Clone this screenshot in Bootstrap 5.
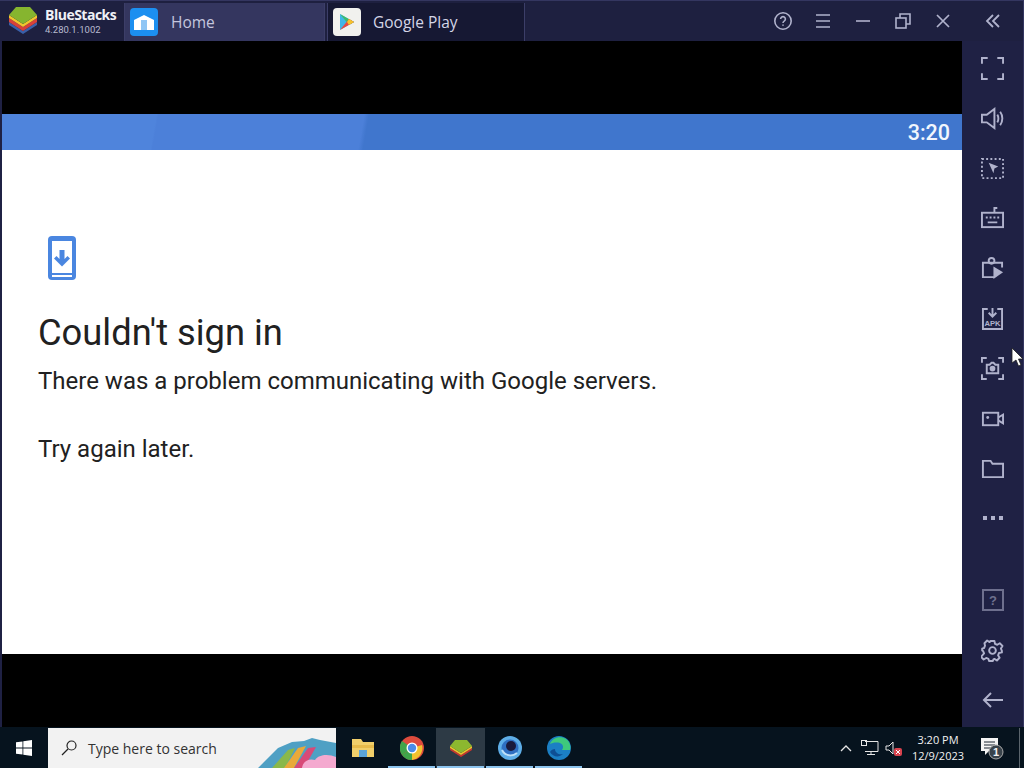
<!DOCTYPE html>
<html lang="en"><head><meta charset="utf-8"><title>BlueStacks</title>
<link href="https://cdn.jsdelivr.net/npm/bootstrap@5.3.0/dist/css/bootstrap.min.css" rel="stylesheet">
<style>
html,body{margin:0;height:768px;overflow:hidden}
body{font-family:"Roboto",sans-serif;background:#06131e}
.bs-window{height:727px;width:1024px;background:#1f2144;border-top:1px solid #343660;border-right:1px solid #343660}
.bs-top{height:40px;background:#1e2040}
.bs-brand{width:124px;flex:none;padding-left:8px;gap:7px}
.bs-name{font:700 14px/14px "Open Sans",sans-serif;color:#f0f0f6;margin-top:7px;letter-spacing:-.5px}
.bs-ver{font:9.500px/12px "Roboto",sans-serif;color:#b9bbd0;margin-top:2px}
.bs-tab{height:38px;margin-top:2px;flex:none;font:15.500px "Open Sans",sans-serif;color:#c4c6de;border-left:1px solid #3c3e68;border-right:1px solid #3c3e68}
.tab-home{width:201px;background:#34365f;padding-left:5px;gap:13px;margin-right:2px}
.tab-play{width:198px;background:#161833;padding-left:5px;gap:12px;color:#d4d5e6}
.tile{width:28px;height:28px;border-radius:4px;flex:none}
.tile-home{background:#1c8ff0}
.tile-play{background:#f1f1ee}
.win-btn{width:40px;height:40px;flex:none}
.win-gap{width:50px;height:40px;margin-left:5px;margin-right:5px;flex:none}
.win-space{flex:1}
.stage{width:960px;margin-left:2px;flex:none}
.side{flex:1}
.bar-black{background:#000}
.bar-a{height:73px}
.bar-b{height:73px}
.status{height:36px;background:linear-gradient(100deg,#4f84dc 0,#4f84dc 16%,#4c80d9 16.200%,#4c80d9 37.500%,#4076cd 38%,#4076cd 100%);color:#f2f6fd;font-weight:500;font-size:21.500px;padding-right:12px;padding-top:2px}
.pane{height:504px;background:#fff;padding:86px 0 0 36px;color:#212121}
.pane h1{font:400 36.300px/40px "Roboto",sans-serif;margin:33px 0 11px;color:#212121}
.pane p{font:400 24px/34px "Roboto",sans-serif;margin:0 0 34px}
.phone{display:block;margin-left:10px}
.side-top{padding-top:2px}
.side-btn{height:50px}
.side-space{height:32px}
.dim{opacity:.55}
.taskbar{height:40px;width:1024px;background:#06131e;margin-top:1px;color:#fff}
.start{width:48px;flex:none}
.search{width:288px;flex:none;background:#f2f2f2;color:#333;font:14px "Segoe UI","Open Sans",sans-serif;padding-left:13px;gap:11px;position:relative;overflow:hidden}
.search-art{position:absolute;right:0;top:0}
.task-first{margin-left:2px}
.task-app{width:49px;height:40px;position:relative;flex:none}
.task-app.on{background:#2d3a45}
.task-app.open::after{content:"";position:absolute;left:1px;right:1px;bottom:0;height:2px;background:#8cc4ee}
.tray-sp{flex:1}
.clock{font:11px/16px "Open Sans",sans-serif;color:#f2f2f2;width:64px;flex:none;text-align:center}
.tray{width:24px;flex:none}
.notif{width:44px;flex:none}
.cursor{position:absolute;left:1011px;top:347px}
.edge{width:5px;margin-left:5px;flex:none;border-left:1px solid #5a646c;height:40px}
</style></head>
<body class="position-relative">
<div class="bs-window d-flex flex-column">
 <div class="bs-top d-flex">
  <div class="bs-brand d-flex">
   <svg width="30" height="30" viewBox="0 0 30 30" class="mt-1 flex-none"><path d="M1 17l14 9 14-9v3L15 29 1 20z" fill="#3a5fa8"/><path d="M1 13l14 9 14-9v4l-14 9-14-9z" fill="#d8413a"/><path d="M1 10l14 9 14-9v3l-14 9-14-9z" fill="#f2c52e"/><path d="M8 2h14l7 8-14 9-14-9z" fill="#86b52f"/></svg>
   <div><div class="bs-name">BlueStacks</div><div class="bs-ver">4.280.1.1002</div></div>
  </div>
  <div class="bs-tab tab-home d-flex align-items-center">
   <div class="tile tile-home d-flex align-items-center justify-content-center"><svg width="22" height="18" viewBox="0 0 22 18"><path d="M1 7l10-5 10 5v10H1z" fill="#fff"/><rect x="8" y="7" width="6" height="10" fill="#8fc6f5"/></svg></div>
   <span>Home</span>
  </div>
  <div class="bs-tab tab-play d-flex align-items-center">
   <div class="tile tile-play d-flex align-items-center justify-content-center"><svg width="18" height="20" viewBox="0 0 18 20"><path d="M2 2l14 8-14 8z" fill="#3fb6e8"/><path d="M2 2l14 8-5 3z" fill="#3dbb6c"/><path d="M2 18l14-8-5-3z" fill="#e8483f"/><path d="M11 7l5 3-5 3-2-3z" fill="#f6c32d"/></svg></div>
   <span>Google Play</span>
  </div>
  <div class="win-space"></div>
  <div class="win-btn d-flex align-items-center justify-content-center"><svg width="20" height="20" viewBox="0 0 20 20" fill="none" stroke="#b0b2cc" stroke-width="1.600"><circle cx="10" cy="10" r="8.200"/><path d="M7.600 8a2.400 2.400 0 1 1 3.600 2.100c-.8.5-1.200 1-1.200 1.900"/><path d="M10 13.400v1.400"/></svg></div>
  <div class="win-btn d-flex align-items-center justify-content-center"><svg width="16" height="16" viewBox="0 0 16 16" stroke="#b0b2cc" stroke-width="1.600"><path d="M1 2h14M1 8h14M1 14h14"/></svg></div>
  <div class="win-btn d-flex align-items-center justify-content-center"><svg width="16" height="16" viewBox="0 0 16 16" stroke="#b0b2cc" stroke-width="1.600"><path d="M1 8h14"/></svg></div>
  <div class="win-btn d-flex align-items-center justify-content-center"><svg width="16" height="16" viewBox="0 0 16 16" fill="none" stroke="#b0b2cc" stroke-width="1.600"><rect x="1" y="5" width="10" height="10"/><path d="M5 5V1h10v10h-4"/></svg></div>
  <div class="win-btn d-flex align-items-center justify-content-center"><svg width="16" height="16" viewBox="0 0 16 16" stroke="#b0b2cc" stroke-width="1.700"><path d="M2 2l12 12M14 2L2 14"/></svg></div>
  <div class="win-gap d-flex align-items-center justify-content-center"><svg width="16" height="16" viewBox="0 0 16 16" fill="none" stroke="#b0b2cc" stroke-width="1.800"><path d="M8 2L2 8l6 6M14 2L8 8l6 6"/></svg></div>
 </div>
 <div class="d-flex flex-grow-1">
  <div class="stage d-flex flex-column">
   <div class="bar-black bar-a"></div>
   <div class="status d-flex align-items-center justify-content-end">3:20</div>
   <div class="pane">
    <svg width="28" height="44" viewBox="0 0 28 44" class="phone"><rect width="28" height="44" rx="4" fill="#4a86e0"/><rect x="4" y="5" width="20" height="32" fill="#fff"/><rect x="4" y="39" width="20" height="2" fill="#fff"/><path d="M11.500 14h5v9l3-3 2.500 2.500L14 30.500 6 22.500 8.500 20l3 3z" fill="#4a86e0"/></svg>
    <h1>Couldn't sign in</h1>
    <p>There was a problem communicating with Google servers.</p>
    <p>Try again later.</p>
   </div>
   <div class="bar-black bar-b"></div>
  </div>
  <div class="side side-top d-flex flex-column">
   <div class="side-btn d-flex align-items-center justify-content-center"><svg width="23" height="23" viewBox="0 0 24 24" fill="none" stroke="#b0b2cc" stroke-width="2"><path d="M1 7V1h6M17 1h6v6M23 17v6h-6M7 23H1v-6"/></svg></div>
   <div class="side-btn d-flex align-items-center justify-content-center"><svg width="23" height="23" viewBox="0 0 24 24" fill="none" stroke="#b0b2cc" stroke-width="2"><path d="M1 8h5l8-6v20l-8-6H1z"/><path d="M17 8c1.500 2 1.500 6 0 8M20 5c3 4 3 10 0 14"/></svg></div>
   <div class="side-btn d-flex align-items-center justify-content-center"><svg width="23" height="23" viewBox="0 0 24 24" fill="none" stroke="#b0b2cc" stroke-width="2"><rect x="1" y="2" width="22" height="20" stroke-dasharray="2 2.400"/><path d="M8 6l10 4-4 2-1 5z" fill="#b0b2cc" stroke="none"/></svg></div>
   <div class="side-btn d-flex align-items-center justify-content-center"><svg width="23" height="23" viewBox="0 0 24 24" fill="none" stroke="#b0b2cc" stroke-width="2"><rect x="1" y="6" width="22" height="15"/><path d="M14 6V1h3"/><path d="M5 11h2M9 11h2M13 11h2M17 11h2M7 16h10"/></svg></div>
   <div class="side-btn d-flex align-items-center justify-content-center"><svg width="23" height="23" viewBox="0 0 24 24" fill="none" stroke="#b0b2cc" stroke-width="2"><path d="M14 21H2V6h20v5"/><circle cx="11" cy="4" r="3"/><path d="M13 10l10 6-10 7z" fill="#b0b2cc" stroke="none"/></svg></div>
   <div class="side-btn d-flex align-items-center justify-content-center"><svg width="21" height="23" viewBox="0 0 22 24" fill="none" stroke="#b0b2cc" stroke-width="2"><path d="M6 2H1v21h20V2h-5"/><path d="M11 1v8M7 6l4 4 4-4"/><text x="11" y="20" text-anchor="middle" font-size="8" font-weight="700" fill="#b0b2cc" stroke="none" font-family="Liberation Sans,sans-serif">APK</text></svg></div>
   <div class="side-btn d-flex align-items-center justify-content-center"><svg width="23" height="23" viewBox="0 0 24 24" fill="none" stroke="#b0b2cc" stroke-width="2"><path d="M1 6V1h5M18 1h5v5M23 18v5h-5M6 23H1v-5"/><path d="M6 8h3l2-2h2l2 2h3v9H6z"/><circle cx="12" cy="12" r="2" fill="#b0b2cc"/></svg></div>
   <div class="side-btn d-flex align-items-center justify-content-center"><svg width="23" height="23" viewBox="0 0 24 24" fill="none" stroke="#b0b2cc" stroke-width="2"><rect x="2" y="6" width="16" height="13"/><path d="M18 11l5-3v9l-5-3"/><circle cx="7" cy="11" r="1.500" fill="#b0b2cc" stroke="none"/></svg></div>
   <div class="side-btn d-flex align-items-center justify-content-center"><svg width="23" height="23" viewBox="0 0 24 24" fill="none" stroke="#b0b2cc" stroke-width="2"><path d="M2 4h8l2 3h11v14H2z"/></svg></div>
   <div class="side-btn d-flex align-items-center justify-content-center"><svg width="20" height="6" viewBox="0 0 20 6" fill="#b0b2cc"><rect y="1" width="4" height="4"/><rect x="8" y="1" width="4" height="4"/><rect x="16" y="1" width="4" height="4"/></svg></div>
   <div class="side-space"></div>
   <div class="side-btn d-flex align-items-center justify-content-center dim"><svg width="22" height="22" viewBox="0 0 22 22" fill="none" stroke="#b0b2cc" stroke-width="2"><rect x="1" y="1" width="20" height="20"/><text x="11" y="16" text-anchor="middle" font-size="13" font-weight="700" fill="#b0b2cc" stroke="none" font-family="Liberation Sans,sans-serif">?</text></svg></div>
   <div class="side-btn d-flex align-items-center justify-content-center"><svg width="23" height="23" viewBox="0 0 24 24" fill="none" stroke="#b0b2cc" stroke-width="2" stroke-linejoin="round"><path d="M10 2h4l.6 3 2.400 1 2.600-1.600 2.800 2.800L20.800 10l1 2.400 0 1.600-3 .6-1 2.400 1.600 2.600-2.800 2.800-2.600-1.600-1 .4-.6 1.800h-4l-.6-2.200-2.400-1-2.600 1.600-2.800-2.800L3.200 15l-1-2.400-1-.6v-2l2-.6 1-2.400L3.600 4.400 6.400 1.600 9 3.200z"/><circle cx="12" cy="12" r="3.500"/></svg></div>
   <div class="side-btn d-flex align-items-center justify-content-center"><svg width="22" height="16" viewBox="0 0 22 16" fill="none" stroke="#b0b2cc" stroke-width="2"><path d="M21 8H2M9 1L2 8l7 7"/></svg></div>
  </div>
 </div>
</div>
<div class="taskbar d-flex">
 <div class="start d-flex align-items-center justify-content-center"><svg width="16" height="16" viewBox="0 0 16 16" fill="#fff"><path d="M0 2.300l6.500-.9v6.200H0zM7.300 1.300L16 0v7.600H7.300zM0 8.400h6.500v6.200L0 13.700zM7.300 8.400H16V16l-8.700-1.300z"/></svg></div>
 <div class="search d-flex align-items-center">
  <svg width="16" height="16" viewBox="0 0 16 16" fill="none" stroke="#222" stroke-width="1.200"><circle cx="10.500" cy="5.500" r="4.500"/><path d="M7 9l-6 6"/></svg>
  <span>Type here to search</span>
  <svg class="search-art" width="80" height="40" viewBox="0 0 80 40"><path d="M2 40L22 20l14-6 12-1 8-3 8 2 16 3v25z" fill="#4fa0c4"/><path d="M16 40l16-18 7-2-10 20z" fill="#8ab84a"/><path d="M28 40l14-20 8-2-12 22z" fill="#e9a93a"/><path d="M38 40l14-20 8-1-12 21z" fill="#d84a78"/><path d="M46 40c1-7 7-10 13-8 4-6 14-6 21-3v11z" fill="#f4a9cf"/></svg>
 </div>
 <div class="task-app task-first d-flex align-items-center justify-content-center"><svg width="22" height="20" viewBox="0 0 22 20"><path d="M0 1h9l2 3h11v15H0z" fill="#f1cf6a"/><rect x="0" y="7" width="22" height="3" fill="#e7bb4b"/><rect x="7" y="12" width="8" height="7" fill="#5aa3d8"/></svg></div>
 <div class="task-app open d-flex align-items-center justify-content-center"><svg width="24" height="24" viewBox="0 0 24 24"><circle cx="12" cy="12" r="12" fill="#dd4b3d"/><path d="M12 12L2 19A12 12 0 0 1 2 5z" fill="#3fa54a"/><path d="M12 12l10-3a12 12 0 0 1-10 15z" fill="#f3c22f"/><path d="M12 12L2 19a12 12 0 0 0 10 5z" fill="#3fa54a"/><circle cx="12" cy="12" r="5.500" fill="#fff"/><circle cx="12" cy="12" r="4.200" fill="#4a8ce8"/></svg></div>
 <div class="task-app on open d-flex align-items-center justify-content-center"><svg width="24" height="18" viewBox="0 0 24 18"><path d="M1 9l11 7 11-7v2l-11 7-11-7z" fill="#c9352f"/><path d="M1 7l11 7 11-7v2l-11 7L1 9z" fill="#efc22c"/><path d="M6 1h12l5 6-11 7L1 7z" fill="#8cb82f"/></svg></div>
 <div class="task-app open d-flex align-items-center justify-content-center"><svg width="24" height="24" viewBox="0 0 24 24"><circle cx="12" cy="12" r="12" fill="#5eaee8"/><circle cx="12" cy="12" r="8.500" fill="#2f6fc2"/><circle cx="13" cy="10" r="5" fill="#1a1a3c"/><path d="M4 14c3 6 10 7 15 3" stroke="#bde0f8" stroke-width="2" fill="none"/></svg></div>
 <div class="task-app open d-flex align-items-center justify-content-center"><svg width="24" height="24" viewBox="0 0 24 24"><circle cx="12" cy="12" r="12" fill="#1b7fc4"/><path d="M3 8C5 2 13-1 19 3c4 3 5 7 4 11h-8c2-3 1-6-2-7C9 6 5 7 3 8z" fill="#3ec97c"/><path d="M8 13c0 4 4 6 8 5-4 4-10 3-13-2 1-2 3-3 5-3z" fill="#0e4f94"/></svg></div>
 <div class="tray-sp"></div>
 <div class="tray d-flex align-items-center justify-content-center"><svg width="12" height="8" viewBox="0 0 12 8" fill="none" stroke="#e6e6e6" stroke-width="1.300"><path d="M1 7l5-5 5 5"/></svg></div>
 <div class="tray d-flex align-items-center justify-content-center"><svg width="18" height="16" viewBox="0 0 18 16" fill="none" stroke="#e6e6e6"><path d="M4 1.500h13v10H4M10 11.500v3M6 14.500h8"/><rect x=".5" y=".5" width="5" height="5"/></svg></div>
 <div class="tray d-flex align-items-center justify-content-center"><svg width="18" height="18" viewBox="0 0 18 18"><path d="M1 7h3l4-4v12l-4-4H1z" fill="none" stroke="#e6e6e6"/><rect x="9" y="9" width="8" height="8" rx="2" fill="#d9434e"/><path d="M11 11l4 4M15 11l-4 4" stroke="#fff"/></svg></div>
 <div class="clock d-flex flex-column justify-content-center"><div>3:20 PM</div><div>12/9/2023</div></div>
 <div class="notif d-flex align-items-center justify-content-center"><svg width="26" height="26" viewBox="0 0 26 26"><path d="M2 3h17v13h-9l-4 4v-4H2z" fill="#f4f4f4"/><path d="M5 7h11M5 10h11M5 13h8" stroke="#1a2530"/><circle cx="17" cy="17" r="7" fill="#39434b" stroke="#aaa"/><text x="17" y="21" text-anchor="middle" font-size="11" font-weight="700" fill="#f2f2f2" font-family="Liberation Sans,sans-serif">1</text></svg></div>
 <div class="edge"></div>
</div>
<svg class="cursor" width="13" height="20" viewBox="0 0 13 20"><path d="M1 1v15l4-3 2.500 6 2.500-1-2.500-6H12z" fill="#fff" stroke="#222" stroke-width=".8"/></svg>
</body></html>
